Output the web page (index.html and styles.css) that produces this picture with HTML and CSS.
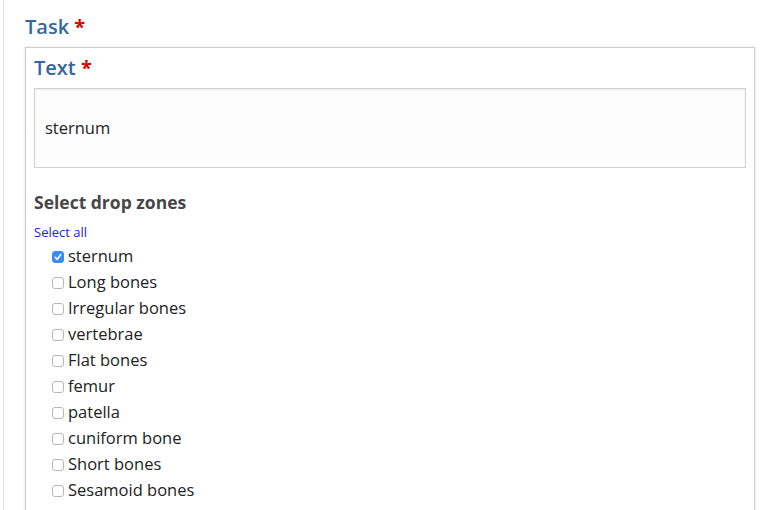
FILE: index.html
```html
<!DOCTYPE html>
<html>
<head>
<meta charset="utf-8">
<link rel="stylesheet" href="styles.css">
</head>
<body>
<div class="page">
  <h1 class="field-title">Task <span class="req">*</span></h1>
  <div class="box">
    <h2 class="field-title sub">Text <span class="req">*</span></h2>
    <div class="text-input">sternum</div>
    <h3 class="zones-title">Select drop zones</h3>
    <a class="select-all" href="#">Select all</a>
    <ul class="zone-list">
      <li><span class="cb checked"><svg viewBox="0 0 12 12" width="12" height="12"><path d="M3.3 6.3 L5.2 8.4 L8.8 3.6" fill="none" stroke="#fff" stroke-width="1.6" stroke-linecap="round" stroke-linejoin="round"/></svg></span>sternum</li>
      <li><span class="cb"></span>Long bones</li>
      <li><span class="cb"></span>Irregular bones</li>
      <li><span class="cb"></span>vertebrae</li>
      <li><span class="cb"></span>Flat bones</li>
      <li><span class="cb"></span>femur</li>
      <li><span class="cb"></span>patella</li>
      <li><span class="cb"></span>cuniform bone</li>
      <li><span class="cb"></span>Short bones</li>
      <li><span class="cb"></span>Sesamoid bones</li>
    </ul>
  </div>
</div>
</body>
</html>
```
FILE: styles.css
```css
html, body {
  margin: 0;
  padding: 0;
  background: #fff;
  overflow: hidden;
}
body {
  font-family: "Open Sans", "Liberation Sans", sans-serif;
  color: #222;
}
.page {
  margin-left: 3px;
  border-left: 1px solid #dcdcdc;
  padding: 13px 0 0 21px;
  height: 510px;
  box-sizing: border-box;
}
.field-title {
  margin: 0;
  font-size: 20px;
  line-height: 27px;
  font-weight: 600;
  color: #35689c;
}
.req {
  color: #e00000;
  font-weight: 700;
}
.box {
  margin-top: 7px;
  width: 730px;
  box-sizing: border-box;
  border: 1px solid #cfcfcf;
  border-bottom: none;
  box-shadow: 0 0 3px rgba(0, 0, 0, 0.12);
  padding: 6px 8px 0 8px;
  height: 480px;
}
.sub {
  margin: 0;
}
.text-input {
  margin-top: 7px;
  height: 80px;
  box-sizing: border-box;
  border: 1px solid #d2d2d2;
  background: #fdfdfd;
  box-shadow: inset 0 1px 2px rgba(0, 0, 0, 0.08);
  padding-left: 10px;
  display: flex;
  align-items: center;
  font-size: 16.5px;
  line-height: 22px;
  color: #222;
}
.zones-title {
  margin: 23px 0 0 0;
  font-size: 17.5px;
  line-height: 23px;
  font-weight: 700;
  color: #474747;
}
.select-all {
  display: block;
  margin-top: 9px;
  font-size: 13px;
  line-height: 18px;
  color: #2020e8;
  text-decoration: none;
}
.zone-list {
  list-style: none;
  margin: 2px 0 0 0;
  padding: 0 0 0 18px;
}
.zone-list li {
  display: flex;
  align-items: center;
  font-size: 16.5px;
  line-height: 26px;
  height: 26px;
  color: #222;
}
.cb {
  display: inline-flex;
  width: 12px;
  height: 12px;
  box-sizing: border-box;
  border: 1px solid #b8b8b8;
  border-radius: 3px;
  background: #fff;
  margin-right: 4px;
  position: relative;
  top: 1px;
  flex: none;
}
.cb.checked {
  border-color: #3a8cf5;
  background: #3a8cf5;
}
.cb svg {
  position: absolute;
  left: -1px;
  top: -1px;
}
```
